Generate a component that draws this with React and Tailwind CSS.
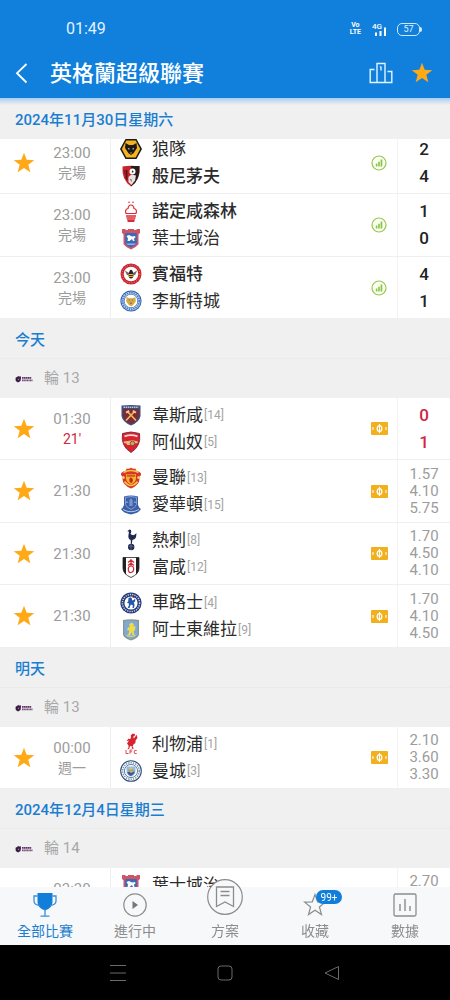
import React from 'react';

/* ---------- club crests ---------- */

const Svg = ({ children }) => (
  <svg viewBox="0 0 22 22" className="h-[22px] w-[22px] shrink-0" aria-hidden="true">
    {children}
  </svg>
);

const crests = {
  wolves: (
    <Svg>
      <path d="M5.500 1h11L22 11l-5.500 10h-11L0 11z" fill="#1c1a17" />
      <path d="M6.300 2.600h9.400l4.500 8.400-4.500 8.400H6.300L1.800 11z" fill="#f5b324" />
      <path d="M5.500 5l3.500 2h4l3.500-2 .5 5-1.700 2.500-1.800 2.800L11 17l-2.500-1.700-1.800-2.800L5 10z" fill="#1c1a17" />
      <path d="M7.800 10l2 .8-.9.9zM14.200 10l-2 .8.9.9z" fill="#fff" />
      <path d="M10 14.600h2l-1 1.500z" fill="#f5b324" />
    </Svg>
  ),
  bournemouth: (
    <Svg>
      <path d="M2.500 1.500Q11 0 19.500 1.500 20.500 15 11 21.500 1.500 15 2.500 1.500z" fill="#c8242c" />
      <path d="M11 1h8.500Q20.500 15 11 21.500z" fill="#2a1a1c" />
      <path d="M5.500 5h2v11l-2-3zM3.600 5h1v5z" fill="#5e1218" />
      <circle cx="12.500" cy="6.500" r="3" fill="#fff" />
      <path d="M8.500 12l3-2.500 4.500 1-1 5-3.500 4.500-3-3z" fill="#e9e3e0" />
      <path d="M12 5.500l1.500.5-.3 1.500h-1.400z" fill="#222" />
      <path d="M9.500 13.500l2.500 1-.5 3z" fill="#8f7f7f" />
    </Svg>
  ),
  forest: (
    <Svg>
      <g fill="none" stroke="#dd2a34" strokeWidth="1.200">
        <path d="M6 12.500Q4.500 8.500 8 7.500 8.500 4 11 4t3 3.500q3.500 1 2 5z" />
        <path d="M6 15h10M6.500 17h9" strokeWidth="1.500" />
      </g>
      <path d="M7 18.300h8l-.8 2.700H7.800z" fill="#dd2a34" />
      <circle cx="9" cy="1.300" r=".8" fill="#dd2a34" />
      <circle cx="13" cy="1.300" r=".8" fill="#dd2a34" />
    </Svg>
  ),
  ipswich: (
    <Svg>
      <path d="M2 1h3.500v1h2.500V1h6v1h2.500V1H20v4l-1.500 1.200v10Q16 19.500 11 21.500 6 19.500 3.500 16.200v-10L2 5z" fill="#cf5566" />
      <path d="M5.200 5h11.600v10.500Q14.500 18.200 11 19.500 7.500 18.200 5.200 15.500z" fill="#3a6cb6" />
      <path d="M6.500 8l2.500-1 3 1.500 3-.5.5 1.500-1.500 1 .5 2.500h-1.500l-1-2-2.500 2H7.500l.5-2.500z" fill="#fff" />
      <path d="M6 15.500h10l-2 1.500H8z" fill="#8db4e3" />
    </Svg>
  ),
  brentford: (
    <Svg>
      <circle cx="11" cy="11" r="10.500" fill="#c9252f" />
      <circle cx="11" cy="11" r="7.300" fill="#fff" />
      <circle cx="11" cy="11" r="8.900" fill="none" stroke="#e58d90" strokeWidth="1" strokeDasharray="1 1.500" />
      <path d="M11 11L4.800 7.500 7 12.300zM11 11L17.200 7.500 15 12.300z" fill="#7b6a5a" />
      <ellipse cx="11" cy="12" rx="2.500" ry="3.400" fill="#2b211b" />
      <path d="M8.700 11.500h4.600M9 13.400h4" stroke="#f0b73a" />
      <circle cx="11" cy="8.200" r="1.500" fill="#2b211b" />
    </Svg>
  ),
  leicester: (
    <Svg>
      <circle cx="11" cy="11" r="10.600" fill="#2b63b4" />
      <circle cx="11" cy="11" r="9.600" fill="#c3d5ee" />
      <circle cx="11" cy="11" r="8.300" fill="none" stroke="#4c7cc0" strokeWidth="1.800" strokeDasharray="1.400 .9" />
      <circle cx="11" cy="11" r="6.800" fill="#fff" stroke="#2b63b4" strokeWidth=".7" />
      <path d="M6.500 7l2.700 1.200h3.600L15.500 7l.3 4.500-2.400 3.200L11 16.500l-2.400-1.800-2.400-3.200z" fill="#dba93c" />
      <path d="M8.500 9.500h1.500v1.500zM13.500 9.500H12v1.500zM11 11.500l1 2.500h-2z" fill="#5f6f90" />
    </Svg>
  ),
  westham: (
    <Svg>
      <path d="M1.500 1.500Q11 .5 20.500 1.500V12Q19.500 18 11 21.500 2.500 18 1.500 12z" fill="#3c4f7c" />
      <path d="M3 5h16v7q-1 5-8 8-7-3-8-8z" fill="#7b2a38" />
      <path d="M3.500 3.200h15" stroke="#b9c7dd" strokeWidth="1.400" strokeDasharray="1.500 .6" />
      <path d="M6 16.500L14.500 7.500M16 16.500L7.500 7.500" stroke="#f0b95a" strokeWidth="1.700" />
      <path d="M5.500 8l3-2 1.200 1.400-3 2.200zM16.500 8l-3-2-1.200 1.400 3 2.200z" fill="#f5cf86" />
    </Svg>
  ),
  arsenal: (
    <Svg>
      <path d="M2.500 2.500Q11-.5 19.500 2.500 21.500 15 11 21.500.5 15 2.500 2.500z" fill="#d8222f" />
      <path d="M2.500 2.500Q11-.5 19.500 2.500 21.500 15 11 21.500.5 15 2.500 2.500z" fill="none" stroke="#8d2b3c" />
      <path d="M4.500 5.300Q11 3 17.500 5.300" fill="none" stroke="#f7d9d8" strokeWidth="1.800" />
      <path d="M3.800 10.500l9-1.200 3 .7 2 .5v1.500l-4 .4-2 1.600H7l-.5-1.500-2.700-.5z" fill="#e3bd78" />
      <circle cx="12.500" cy="12.500" r="2.300" fill="#c4a368" stroke="#7d3030" strokeWidth=".7" />
    </Svg>
  ),
  manutd: (
    <Svg>
      <path d="M11 .8q2 1.500 4.500.7l.5 2 3.500 1.500q2 1 1.500 3-1.800 1-1.400 3.500Q19.500 18 11 21.500 2.500 18 2.400 11.500 2.800 9 1 8q-.5-2 1.500-3L6 3.500l.5-2Q9 2.300 11 .8z" fill="#d9352b" />
      <path d="M3.500 5.500Q11 1.500 18.500 5.500M4.500 14.500Q11 22.500 17.500 14.500" fill="none" stroke="#f8c536" strokeWidth="1.600" />
      <path d="M6 7h10v4q0 4-5 6.500Q6 15 6 11z" fill="#f3b52b" />
      <path d="M6.800 7.500h8.400v2.300H6.800z" fill="#d4562a" />
      <path d="M10 10.500l2 .5 1 2-1 3-2-.5-.8-2.500z" fill="#c42625" />
      <circle cx="3.300" cy="10.500" r="1.500" fill="#f1ce6a" />
      <circle cx="18.700" cy="10.500" r="1.500" fill="#f1ce6a" />
    </Svg>
  ),
  everton: (
    <Svg>
      <path d="M4 2.500Q11 .5 18 2.500V11q1 3 3 4-2 4-10 5.500Q3 19 1 15q2-1 3-4z" fill="#3a5fa8" />
      <path d="M5.500 3.400Q11 1.800 16.500 3.400v7q-1 3.200-5.500 5-4.500-1.800-5.500-5z" fill="none" stroke="#8aa5d8" strokeWidth=".9" />
      <path d="M9.300 12V6.500L11 4l1.700 2.500V12z" fill="#7994cb" />
      <path d="M3 15.500q8 4.500 16 0" fill="none" stroke="#b9c8e8" strokeWidth="1" />
      <path d="M6 9q1-3 2 0M14 9q1-3 2 0" fill="none" stroke="#9bb1dd" strokeWidth=".8" />
    </Svg>
  ),
  spurs: (
    <Svg>
      <circle cx="11.200" cy="18" r="3.200" fill="#1e2850" />
      <path d="M8.800 17.500q2.500-1.500 4.800.3M11 15v6" fill="none" stroke="#7e88ac" strokeWidth=".6" />
      <path d="M9.500.5q2 0 1.800 2.200L10.500 5q1.500 1.500 3.500 1l2.500-1.800-.5 4q-1 2.600-3.600 2.900l-.6 4h-.9l-.2-4Q7.500 9.500 8.600 5.200L9 2.800 7.300 2.300z" fill="#1e2850" />
    </Svg>
  ),
  fulham: (
    <Svg>
      <path d="M3 1.500h16V12q0 6-8 9.500Q3 18 3 12z" fill="#fff" stroke="#272325" strokeWidth=".8" />
      <path d="M3 1.500h3v17Q3 16 3 12zM16 1.500h3V12q0 4-3 6.500z" fill="#231f20" />
      <path d="M8 6.500l3-2.500 3 2.500M8 9.500l3-2.500 3 2.500M8.300 13q0-3 2.700-3t2.700 3-2.700 3.500-2.700-3.500M11 3v7" fill="none" stroke="#cf2a36" strokeWidth="1.200" />
    </Svg>
  ),
  chelsea: (
    <Svg>
      <circle cx="11" cy="11" r="10.600" fill="#243a78" />
      <circle cx="11" cy="11" r="8.600" fill="none" stroke="#c5cfe4" strokeWidth="1.500" strokeDasharray="1.300 1" />
      <circle cx="11" cy="11" r="6.600" fill="#fff" />
      <path d="M8.500 6l2-.8 1.500 1.300v2l2.300-.7V6.500l1 .8-.2 2.200-1.300 1 .8 2.500-.7 3h-1.400l.3-2.700-2-.8L9.500 16H7.700l1.300-3-.5-2H6.800l1.400-1.500z" fill="#2658a8" />
      <path d="M12.500 5.500h2" stroke="#cf3b40" />
    </Svg>
  ),
  villa: (
    <Svg>
      <path d="M3 1Q11-.3 19 1v14.500Q18.500 19 11 21.500 3.500 19 3 15.500z" fill="#8b9a83" />
      <path d="M4.300 2.200Q11 1 17.700 2.200v13Q17 17.800 11 20 5 17.800 4.300 15.200z" fill="#7fa9dd" />
      <path d="M9 5.500l2.500-2 2.300 1.500-.3 2.500 2-.5-.5 4-1.500 1.500 1 3.500h-2l-1-3-1.500 3.500H8l1.500-5-2.500-.5 1-2.500 2-.5z" fill="#f1dc43" />
      <path d="M6.500 16.500q4.500 2 9 0" fill="none" stroke="#e8dc6b" />
    </Svg>
  ),
  liverpool: (
    <Svg>
      <path d="M14.500.8l.8 1.500-2 1.500.5 1.700 3-3.700.6 3.200-1.800 2.600-.2 2.300-2 1.600-.9 2.300 1.600 1.700-2.200.3-.3-2.800-1.700.2-.7 2.800-2 .2 1.300-1.500v-2.300l-1.500-2 2-3-2.500.8L8.500 5.500 10 6.300l1-1.700-.3-2 1.600-1.800z" fill="#d62431" />
      <path d="M6 17v3.500h2.500M10 20.700V17h2.500M10 18.800h2M16.700 17.500q-2.600-1-2.600 1.500t2.600 1.500" fill="none" stroke="#de4b54" strokeWidth="1" />
    </Svg>
  ),
  mancity: (
    <Svg>
      <circle cx="11" cy="11" r="10.300" fill="#fff" stroke="#2b4d7c" strokeWidth="1.100" />
      <circle cx="11" cy="11" r="8.300" fill="none" stroke="#7d96b5" strokeWidth="1.600" strokeDasharray="1.400 1" />
      <circle cx="11" cy="11" r="6.600" fill="#f7f9fb" stroke="#2b4d7c" strokeWidth=".7" />
      <path d="M6.500 6.500h9V11q0 3.500-4.500 5.500Q6.500 14.500 6.500 11z" fill="#8fbce3" />
      <path d="M8 9.500h6v1.500H8z" fill="#c99b3d" />
      <path d="M7 12.500l2.500-1 1.500 1.500 3-1.500.8.500Q14 14.800 11 16q-3-1.200-4-3.500z" fill="#435b80" />
      <path d="M9.700 7.500h2.600v2H9.700z" fill="#e5c067" />
    </Svg>
  ),
};

/* ---------- icons ---------- */

const Star = ({ className }) => (
  <svg viewBox="0 0 24 24" className={className} aria-hidden="true">
    <path d="M12 .8l2.900 7.700 8.300.4-6.500 5.100 2.200 8-6.900-4.500-6.900 4.500 2.200-8L.8 8.900l8.300-.4z" fill="#fea915" />
  </svg>
);

const StatsIcon = () => (
  <svg viewBox="0 0 16 16" className="h-4 w-4" aria-hidden="true">
    <circle cx="8" cy="8" r="7" fill="#fbfff2" stroke="#9bc455" strokeWidth="1.200" />
    <path d="M4.800 8.500h1.600v3H4.800zM7.200 6.800h1.600v4.700H7.200zM9.600 4.600h1.700v6.900H9.600z" fill="#84c441" />
  </svg>
);

const TicketIcon = () => (
  <svg viewBox="0 0 17 13" className="h-[13px] w-[17px]" aria-hidden="true">
    <rect width="17" height="13" rx="1" fill="#f2b01e" />
    <ellipse cx="8.500" cy="6.500" rx="2.300" ry="2.900" fill="none" stroke="#fff" strokeWidth="1.300" />
    <path d="M8.500 2v9M2 5v3M15 5v3" stroke="#fff" strokeWidth="1.100" />
  </svg>
);

const LeagueLogo = () => (
  <svg viewBox="0 0 18 8" className="h-2 w-[18px]" aria-hidden="true">
    <path d="M1 2l1 .5L3 .8l1 1L5.500 1l.5 2-.5 3-2.500 1.500L.8 6 .5 3.800z" fill="#3b1644" />
    <path d="M2.500 4l2-.5-.8 2z" fill="#9c869f" />
    <path d="M7 2.800h9.500" stroke="#5d3764" strokeWidth="1.800" strokeDasharray="1.600 .3" />
    <path d="M7 5.300h10.500" stroke="#7a4d7f" strokeWidth="1.800" strokeDasharray="1.300 .3" />
  </svg>
);

/* ---------- data ---------- */

const days = [
  {
    date: '2024年11月30日星期六',
    pinned: true,
    matches: [
      { star: true, time: '23:00', status: '完場', home: ['wolves', '狼隊'], away: ['bournemouth', '般尼茅夫'], score: [2, 4], winner: 'away' },
      { time: '23:00', status: '完場', home: ['forest', '諾定咸森林'], away: ['ipswich', '葉士域治'], score: [1, 0], winner: 'home' },
      { time: '23:00', status: '完場', home: ['brentford', '賓福特'], away: ['leicester', '李斯特城'], score: [4, 1], winner: 'home' },
    ],
  },
  {
    date: '今天',
    round: '輪 13',
    matches: [
      { star: true, time: '01:30', status: "21'", live: true, home: ['westham', '韋斯咸', 14], away: ['arsenal', '阿仙奴', 5], score: [0, 1] },
      { star: true, time: '21:30', home: ['manutd', '曼聯', 13], away: ['everton', '愛華頓', 15], odds: ['1.57', '4.10', '5.75'] },
      { star: true, time: '21:30', home: ['spurs', '熱刺', 8], away: ['fulham', '富咸', 12], odds: ['1.70', '4.50', '4.10'] },
      { star: true, time: '21:30', home: ['chelsea', '車路士', 4], away: ['villa', '阿士東維拉', 9], odds: ['1.70', '4.10', '4.50'] },
    ],
  },
  {
    date: '明天',
    round: '輪 13',
    matches: [
      { star: true, time: '00:00', status: '週一', home: ['liverpool', '利物浦', 1], away: ['mancity', '曼城', 3], odds: ['2.10', '3.60', '3.30'] },
    ],
  },
  {
    date: '2024年12月4日星期三',
    round: '輪 14',
    matches: [
      { time: '03:30', status: '週三', home: ['ipswich', '葉士域治'], away: ['brentford', '水晶宮'], odds: ['2.70', '3.30', '2.60'] },
    ],
  },
];

/* ---------- rows ---------- */

const Team = ({ team, bold }) => {
  const [crest, name, rank] = team;
  return (
    <div className="flex h-[27px] items-center">
      {crests[crest]}
      <span className={`ml-[10px] text-[17px] leading-[27px] text-[#2b2b2b] ${bold ? 'font-medium' : ''}`}>{name}</span>
      {rank && <span className="ml-px text-xs text-[#a3a3a3]">[{rank}]</span>}
    </div>
  );
};

const MatchRow = ({ match }) => (
  <li className="flex h-[62px] items-stretch border-b border-[#efefef] bg-white even:h-[63px] last:h-[62px]">
    <div className="flex w-12 items-center justify-center">
      {match.star && (
        <button type="button" aria-label="收藏"><Star className="h-[22px] w-[22px]" /></button>
      )}
    </div>
    <div className="flex w-[62px] flex-col items-center justify-center pr-[14px] leading-5 text-[#9c9c9c]">
      <span className="text-[15px]">{match.time}</span>
      {match.status && <span className={match.live ? 'text-sm text-[#cf2740]' : 'text-sm'}>{match.status}</span>}
    </div>
    <div className="flex min-w-0 flex-1 flex-col justify-center border-l border-[#efefef] pl-[9px]">
      <Team team={match.home} bold={match.winner === 'home'} />
      <Team team={match.away} bold={match.winner === 'away'} />
    </div>
    <div className="flex w-9 items-center justify-center">
      {match.winner ? <StatsIcon /> : <TicketIcon />}
    </div>
    <div className="flex w-[53px] flex-col items-center justify-center border-l border-[#f3f3f3]">
      {match.score && match.score.map((goals, i) => (
        <span key={i} className={`text-[17px] font-medium leading-[27px] ${match.live ? 'text-[#cf2740]' : 'text-[#222]'}`}>{goals}</span>
      ))}
      {match.odds && match.odds.map((odd, i) => (
        <span key={i} className="text-[15px] leading-[17px] text-[#9c9c9c]">{odd}</span>
      ))}
    </div>
  </li>
);

const Day = ({ day }) => (
  <section>
    {day.pinned ? (
      <h2 className="sticky top-0 z-10 flex h-[41px] items-center bg-linear-to-b from-[#a9cef0] to-[#f0f0f0] to-[7px] px-[15px] pt-1 text-[15px] font-medium text-[#1a7ed0]">{day.date}</h2>
    ) : (
      <h2 className="flex h-10 items-center border-b border-[#eaeaea] bg-[#f0f0f0] px-[15px] pt-1 text-[15px] font-medium text-[#1a7ed0]">{day.date}</h2>
    )}
    {day.round && (
      <div className="flex h-[39px] items-center gap-[11px] bg-[#f0f0f0] px-[15px] text-[15px] text-[#a8a8a8]">
        <LeagueLogo />
        <span>{day.round}</span>
      </div>
    )}
    <ul className={day.pinned ? '-mt-[7px]' : ''}>
      {day.matches.map((match, i) => <MatchRow key={i} match={match} />)}
    </ul>
  </section>
);

/* ---------- bottom tabs ---------- */

const Tab = ({ label, active, children }) => (
  <button type="button" className={`flex flex-1 flex-col items-center ${active ? 'text-[#1a7ed0]' : 'text-[#8c8c8c]'}`}>
    <span className="flex h-9 items-center justify-center">{children}</span>
    <span className="text-sm leading-4">{label}</span>
  </button>
);

const TabBar = () => (
  <nav className="relative z-20 flex h-[58px] shrink-0 bg-[#f7f8f9]">
    <Tab label="全部比賽" active>
      <svg viewBox="0 0 24 24" className="h-6 w-6" aria-hidden="true">
        <path d="M4.500 0h15v9q0 6-7.500 8.500Q4.500 15 4.500 9z" fill="#117fda" />
        <path d="M4.500 3H1v5q0 4 6 4.500M19.500 3H23v5q0 4-6 4.500M12 16v7M7.500 23.200h9" fill="none" stroke="#3a8fdb" strokeWidth="1.300" />
      </svg>
    </Tab>
    <Tab label="進行中">
      <svg viewBox="0 0 24 24" className="h-6 w-6" aria-hidden="true">
        <circle cx="12" cy="12" r="11.200" fill="none" stroke="currentColor" strokeWidth="1.200" />
        <path d="M9.500 8l5.500 4-5.500 4z" fill="#777" />
      </svg>
    </Tab>
    <Tab label="方案">
      <svg viewBox="0 0 36 36" className="-mt-4 h-9 w-9" aria-hidden="true">
        <circle cx="18" cy="18" r="17.300" fill="#f7f8f9" stroke="currentColor" strokeWidth="1.200" />
        <path d="M9.500 8h17v19.500L18 23l-8.500 4.500zM13.500 12.500h9M13.500 16.500h9" fill="none" stroke="currentColor" strokeWidth="1.300" />
      </svg>
    </Tab>
    <Tab label="收藏">
      <span className="relative">
        <svg viewBox="0 0 24 24" className="h-6 w-6" aria-hidden="true">
          <path d="M12 1.500l2.700 7.300 7.700.3-6 4.900 2.100 7.500-6.500-4.300-6.500 4.300L7.600 14l-6-4.900 7.700-.3z" fill="none" stroke="currentColor" strokeWidth="1.200" />
        </svg>
        <span className="absolute -top-[3px] left-[13px] flex h-[14px] w-[26px] items-center justify-center rounded-full bg-[#117fda] text-[10px] text-white">99+</span>
      </span>
    </Tab>
    <Tab label="數據">
      <svg viewBox="0 0 24 24" className="h-6 w-6" aria-hidden="true">
        <rect x="1" y="1" width="22" height="22" rx="1.500" fill="none" stroke="currentColor" strokeWidth="1.300" />
        <path d="M7 11v7M12 6v12M17 13v5" stroke="currentColor" strokeWidth="1.400" />
      </svg>
    </Tab>
  </nav>
);

const App = () => (
  <div className="flex h-screen flex-col overflow-hidden bg-[#f0f0f0] font-['Roboto','Noto_Sans_CJK_TC',sans-serif]">
    <header className="shrink-0 bg-[#1080dc] text-white">
      {/* Status bar */}
      <div className="flex h-12 items-center pt-[10px] pl-[66px] pr-7">
        <span className="flex-1 text-base text-[#e3f2ff]">01:49</span>
        <span className="mr-[11px] text-center text-[7px] font-bold leading-[7px]">Vo<br />LTE</span>
        <span className="mr-[10px] flex items-end">
          <span className="self-start text-[8px] font-medium leading-[7px]">4G</span>
          <svg viewBox="0 0 13 13" className="-ml-2 h-[13px] w-[13px]" aria-hidden="true">
            <path d="M1 9.500h2V13H1zM5.500 8h2v5h-2zM10 4.500h2V13h-2z" fill="#fff" />
          </svg>
        </span>
        <span className="flex items-center">
          <span className="flex h-[13px] w-[23px] items-center justify-center rounded-[5px] border border-[#cfe6fb] text-[9px] leading-none text-[#e3f2ff]">57</span>
          <span className="h-[5px] w-0.5 rounded-r-sm bg-[#cfe6fb]" />
        </span>
      </div>
      {/* Title bar */}
      <div className="flex h-[50px] items-center pl-3 pr-[17px]">
        <button type="button" aria-label="返回" className="mr-[18px]">
          <svg viewBox="0 0 20 24" className="h-6 w-5" aria-hidden="true">
            <path d="M14.500 3L5 12.200l9.500 9.300" fill="none" stroke="#fff" strokeWidth="1.800" />
          </svg>
        </button>
        <h1 className="flex-1 text-[22px] font-medium">英格蘭超級聯賽</h1>
        <button type="button" aria-label="積分榜" className="mr-[18px]">
          <svg viewBox="0 0 24 22" className="h-[22px] w-6" aria-hidden="true">
            <path d="M8 20.500V1.500h8v19M5.500 7.500H1.200v13h21.600v-11H18.500M12 4.500v4M11 5.200l1-.7" fill="none" stroke="#e3f4ff" strokeWidth="1.400" />
          </svg>
        </button>
        <button type="button" aria-label="收藏聯賽"><Star className="h-[22px] w-[22px]" /></button>
      </div>
    </header>

    <main className="min-h-0 flex-1 overflow-y-auto [scrollbar-width:none]">
      {days.map((day) => <Day key={day.date} day={day} />)}
    </main>

    <TabBar />

    {/* System navigation */}
    <div className="flex h-[55px] shrink-0 items-center justify-center gap-[91px] bg-black text-[#6b6b6b]">
      <button type="button" aria-label="最近">
        <svg viewBox="0 0 16 16" className="h-4 w-4" aria-hidden="true"><path d="M0 .5h16M0 8h16M0 15.500h16" stroke="currentColor" /></svg>
      </button>
      <button type="button" aria-label="主畫面">
        <svg viewBox="0 0 16 16" className="h-4 w-4" aria-hidden="true"><rect x="1" y="1" width="14" height="14" rx="3" fill="none" stroke="currentColor" /></svg>
      </button>
      <button type="button" aria-label="返回上頁">
        <svg viewBox="0 0 16 16" className="h-4 w-4" aria-hidden="true"><path d="M14.500 1.500v13L1 8z" fill="none" stroke="currentColor" strokeLinejoin="round" /></svg>
      </button>
    </div>
  </div>
);

export default App;
